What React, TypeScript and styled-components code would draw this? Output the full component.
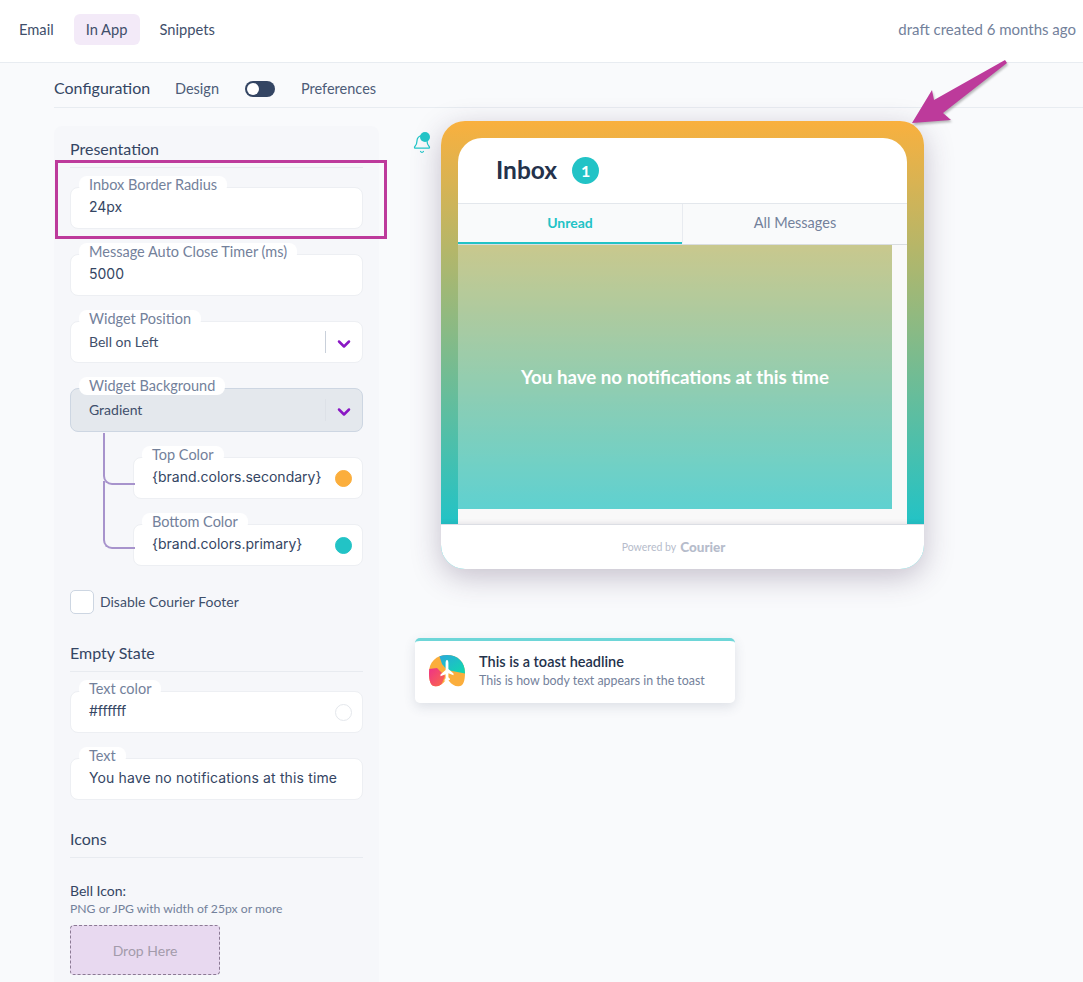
import React from "react";
import styled, { createGlobalStyle } from "styled-components";
import { Bell, ChevronDown } from "lucide-react";

const GlobalStyle = createGlobalStyle`
    html, body {
        margin: 0;
        height: 982px;
        overflow: hidden;
        background: #f9fafc;
        font-family: "Lato", "Noto Sans", sans-serif;
        color: #344563;
    }
    * {
        box-sizing: border-box;
    }
`;

const Page = styled.div`
    position: relative;
    width: 1083px;
    height: 982px;
    overflow: hidden;
`;

const Header = styled.header`
    height: 63px;
    padding: 14px 7px 0 19px;
    display: flex;
    justify-content: space-between;
    background: #fff;
    border-bottom: 1px solid #e8ecf1;
`;

const Tabs = styled.nav`
    display: flex;
    align-items: flex-start;
    gap: 20px;
`;

const Tab = styled.div<{ $active?: boolean }>`
    height: 31px;
    line-height: 31px;
    font-size: 14.7px;
    color: #3f4f6b;
    border-radius: 6px;
    background: ${(p) => (p.$active ? "#f3eaf8" : "transparent")};
    padding: ${(p) => (p.$active ? "0 12px" : "0")};
`;

const Draft = styled.div`
    line-height: 31px;
    font-size: 15px;
    color: #73819b;
`;

const Main = styled.main`
    padding-left: 54px;
`;

const ConfigBar = styled.div`
    height: 45px;
    padding-top: 7px;
    display: flex;
    align-items: center;
    border-bottom: 1px solid #e8ecf1;
`;

const ConfigTitle = styled.div`
    width: 121px;
    padding-bottom: 2px;
    font-size: 16px;
    color: #344563;
`;

const ConfigOption = styled.div`
    font-size: 14.5px;
    color: #4d5c78;
`;

const Toggle = styled.div`
    width: 30px;
    height: 16px;
    margin: 0 26px;
    padding: 2px;
    border-radius: 8px;
    background: #344563;
    &::before {
        content: "";
        display: block;
        width: 12px;
        height: 12px;
        border-radius: 50%;
        background: #fff;
    }
`;

const Columns = styled.div`
    display: flex;
    align-items: flex-start;
`;

const Sidebar = styled.aside`
    width: 325px;
    height: 880px;
    margin-top: 18px;
    padding: 13px 16px 0;
    border-radius: 8px;
    background: #f6f7fa;
`;

const SectionTitle = styled.h2<{ $top?: number }>`
    margin: ${(p) => p.$top ?? 0}px 0 0;
    height: 29px;
    line-height: 19px;
    font-size: 16px;
    font-weight: 400;
    color: #344563;
    border-bottom: 1px solid #e8ebf0;
`;

const Field = styled.div<{ $filled?: boolean; $top?: number; $left?: number }>`
    position: relative;
    height: ${(p) => (p.$filled ? 44 : 42)}px;
    margin-top: ${(p) => p.$top ?? 25}px;
    margin-left: ${(p) => p.$left ?? 0}px;
    padding: 0 10px 0 18px;
    display: flex;
    align-items: center;
    justify-content: space-between;
    border-radius: 8px;
    background: ${(p) => (p.$filled ? "#e4e8ed" : "#fff")};
    border: 1px solid ${(p) => (p.$filled ? "#cdd6e2" : "#edeff3")};
`;

const FieldLabel = styled.span`
    position: absolute;
    left: 8px;
    top: -12px;
    height: 18px;
    padding: 0 10px;
    line-height: 18px;
    white-space: nowrap;
    font-size: 14.5px;
    color: #73819b;
    background: #fff;
    border-radius: 8px;
`;

const Value = styled.span<{ $spaced?: boolean }>`
    font-family: "Inter", "Liberation Sans", sans-serif;
    font-size: 14px;
    letter-spacing: ${(p) => (p.$spaced ? "0.14px" : "0")};
    color: #344563;
    white-space: nowrap;
    padding-bottom: 4px;
`;

const SelectValue = styled.span`
    font-size: 14px;
    color: #3f4f6b;
    padding-bottom: 1px;
`;

const SelectArrow = styled.span<{ $strong?: boolean }>`
    width: 37px;
    height: 22px;
    margin-right: -10px;
    display: flex;
    align-items: center;
    justify-content: center;
    padding-top: 4px;
    color: #8a17c4;
    border-left: 1px solid ${(p) => (p.$strong ? "#c9d0da" : "#dde1e7")};
`;

const Swatch = styled.span<{ $color: string }>`
    width: 17px;
    height: 17px;
    border-radius: 50%;
    background: ${(p) => p.$color};
    border: 1px solid ${(p) => (p.$color === "#fff" ? "#e4e7ec" : p.$color)};
`;

const NestedField = styled(Field)<{ $lineTop: number; $lineHeight: number }>`
    &::before {
        content: "";
        position: absolute;
        left: -31px;
        top: ${(p) => p.$lineTop}px;
        width: 30px;
        height: ${(p) => p.$lineHeight}px;
        border-left: 2px solid #a793cc;
        border-bottom: 2px solid #a793cc;
        border-bottom-left-radius: 9px;
    }
`;

const CheckRow = styled.label`
    margin-top: 24px;
    display: flex;
    align-items: center;
    gap: 6px;
    font-size: 14px;
    color: #3f4f6b;
`;

const CheckText = styled.span`
    padding-bottom: 2px;
`;

const CheckBox = styled.span`
    width: 24px;
    height: 24px;
    border-radius: 5px;
    background: #fff;
    border: 1px solid #cdd6e2;
`;

const UploadLabel = styled.div`
    margin-top: 23px;
    font-size: 14px;
    line-height: 20px;
    color: #344563;
`;

const UploadHint = styled.div`
    font-size: 12.2px;
    line-height: 16px;
    color: #73819b;
`;

const DropZone = styled.div`
    width: 150px;
    height: 50px;
    margin-top: 8px;
    display: flex;
    align-items: center;
    justify-content: center;
    font-size: 14px;
    color: #a39bab;
    background: #e8d9f0;
    border: 1px dashed #8b7a94;
    border-radius: 4px;
`;

const Preview = styled.section`
    padding: 13px 0 0 33px;
    display: flex;
    align-items: flex-start;
`;

const BellHolder = styled.div`
    position: relative;
    width: 29px;
    height: 24px;
    margin-top: 12px;
    padding-top: 1px;
    color: #22c3c6;
    flex: none;
`;

const BellDot = styled.span`
    position: absolute;
    left: 8px;
    top: -1px;
    width: 10px;
    height: 10px;
    border-radius: 50%;
    background: #22c3c6;
`;

const PreviewStack = styled.div`
    display: flex;
    flex-direction: column;
`;

const Widget = styled.div`
    width: 483px;
    height: 448px;
    padding-top: 17px;
    display: flex;
    flex-direction: column;
    border-radius: 24px;
    overflow: hidden;
    background: linear-gradient(180deg, #f9b03e 0%, #22c3c6 90%);
`;

const WidgetShadow = styled.div`
    border-radius: 24px;
    box-shadow: 0 8px 30px rgba(60, 40, 80, 0.28);
`;

const WidgetInner = styled.div`
    flex: 1;
    margin: 0 17px;
    display: flex;
    flex-direction: column;
    border-radius: 24px 24px 0 0;
    overflow: hidden;
`;

const InboxHeader = styled.div`
    height: 65px;
    padding-left: 38px;
    display: flex;
    align-items: center;
    gap: 15px;
    background: #fff;
`;

const InboxTitle = styled.div`
    font-size: 24.5px;
    font-weight: 700;
    color: #24324b;
    padding-bottom: 3px;
`;

const CountBadge = styled.div`
    width: 27px;
    height: 27px;
    display: flex;
    align-items: center;
    justify-content: center;
    border-radius: 50%;
    font-size: 16px;
    font-weight: 700;
    color: #fff;
    background: #22c3c6;
`;

const InboxTabs = styled.div`
    height: 42px;
    display: flex;
    background: #f9fafb;
    border-top: 1px solid #e3e7ec;
    border-bottom: 1px solid #d9dde0;
`;

const InboxTab = styled.div<{ $active?: boolean }>`
    flex: 1;
    padding-bottom: 2px;
    display: flex;
    align-items: center;
    justify-content: center;
    font-size: ${(p) => (p.$active ? 14 : 14.5)}px;
    font-weight: ${(p) => (p.$active ? 700 : 400)};
    color: ${(p) => (p.$active ? "#22c3c6" : "#73819b")};
    border-bottom: 2px solid ${(p) => (p.$active ? "#22c3c6" : "transparent")};
    & + & {
        border-left: 1px solid #e8ebf0;
    }
`;

const InboxBody = styled.div`
    flex: 1;
    display: grid;
    grid-template-columns: 1fr 15px;
    grid-template-rows: 1fr 15px;
`;

const EmptyPanel = styled.div`
    display: flex;
    align-items: center;
    justify-content: center;
    font-size: 18.7px;
    font-weight: 700;
    color: #fff;
    background: rgba(255, 255, 255, 0.25);
`;

const ScrollTrack = styled.div`
    grid-row: 1 / 3;
    grid-column: 2;
    background: #f9f9f9;
`;

const ScrollCorner = styled.div`
    background: #f9f9f9;
`;

const WidgetFooter = styled.div`
    height: 45px;
    padding-right: 18px;
    display: flex;
    align-items: center;
    justify-content: center;
    gap: 4px;
    background: #fff;
    border-top: 1px solid #dcdee4;
    box-shadow: 0 -2px 4px rgba(60, 40, 80, 0.08);
    position: relative;
`;

const PoweredBy = styled.span`
    font-size: 10.5px;
    color: #b6bccb;
`;

const CourierMark = styled.span`
    font-size: 13.5px;
    font-weight: 900;
    color: #b6bccb;
`;

const Toast = styled.div`
    width: 320px;
    height: 65px;
    margin: 69px 0 0 -26px;
    padding: 0 0 3px 13px;
    display: flex;
    align-items: center;
    gap: 13px;
    position: relative;
    background: #fff;
    border-radius: 5px;
    border-top: 3px solid #6ed6d8;
    box-shadow: 0 4px 12px rgba(60, 70, 100, 0.14);
`;

const ToastText = styled.div`
    display: flex;
    flex-direction: column;
    gap: 1px;
`;

const ToastTitle = styled.div`
    font-size: 14.5px;
    line-height: 18px;
    font-weight: 600;
    color: #24324b;
`;

const ToastBody = styled.div`
    font-size: 12.4px;
    line-height: 17px;
    color: #73819b;
`;

const Highlight = styled.div`
    position: absolute;
    left: 55px;
    top: 160px;
    width: 332px;
    height: 79px;
    border: 3px solid #bd3a9b;
    pointer-events: none;
`;

const Arrow = styled.svg`
    position: absolute;
    left: 905px;
    top: 55px;
    filter: drop-shadow(1px 2px 1px rgba(60, 60, 60, 0.35));
`;

const ToastIcon = () => (
    <svg width="38" height="32" viewBox="0 0 38 32" style={{ flex: "none" }}>
        <defs>
            <clipPath id="lungs">
                <path d="M19 0C30 0 37 7 37 18c0 8-2 13-5 13-4 1-8-1-11-5l-2-4-2 4c-3 4-7 6-11 5C3 31 1 26 1 18 1 7 8 0 19 0Z" />
            </clipPath>
            <linearGradient id="cool" x1="0" y1="0" x2="1" y2="1">
                <stop offset="0" stopColor="#2aa8dc" />
                <stop offset="1" stopColor="#0fdcaa" />
            </linearGradient>
            <linearGradient id="hot" x1="0" y1="0" x2="1" y2="1">
                <stop offset="0" stopColor="#ee2f8a" />
                <stop offset="1" stopColor="#fb6d45" />
            </linearGradient>
        </defs>
        <g clipPath="url(#lungs)">
            <rect width="38" height="32" fill="#fbae3c" />
            <path d="M11 0h28v19L19 15 14 9Z" fill="url(#cool)" />
            <path d="M0 14l9-1 8 8-5 12H0Z" fill="url(#hot)" />
        </g>
        <path
            d="M19 5c1 0 1.400 1.500 1.400 3v6l5.100 4.500v1.700l-5.100-2v4l1.500 1.600v1.200L19 25l-2.500 1v-1.200l1.100-1.600v-4l-5.100 2v-1.700l5.100-4.500V8c0-1.500.4-3 1.400-3Z"
            fill="#fff"
        />
    </svg>
);

const App = () => (
    <Page>
        <GlobalStyle />
        <Header>
            <Tabs>
                <Tab>Email</Tab>
                <Tab $active>In App</Tab>
                <Tab>Snippets</Tab>
            </Tabs>
            <Draft>draft created 6 months ago</Draft>
        </Header>
        <Main>
            <ConfigBar>
                <ConfigTitle>Configuration</ConfigTitle>
                <ConfigOption>Design</ConfigOption>
                <Toggle />
                <ConfigOption>Preferences</ConfigOption>
            </ConfigBar>
            <Columns>
                <Sidebar>
                    <SectionTitle>Presentation</SectionTitle>
                    <Field $top={19}>
                        <FieldLabel>Inbox Border Radius</FieldLabel>
                        <Value>24px</Value>
                    </Field>
                    <Field>
                        <FieldLabel>Message Auto Close Timer (ms)</FieldLabel>
                        <Value>5000</Value>
                    </Field>
                    <Field>
                        <FieldLabel>Widget Position</FieldLabel>
                        <SelectValue>Bell on Left</SelectValue>
                        <SelectArrow $strong>
                            <ChevronDown size={20} strokeWidth={3} />
                        </SelectArrow>
                    </Field>
                    <Field $filled>
                        <FieldLabel>Widget Background</FieldLabel>
                        <SelectValue>Gradient</SelectValue>
                        <SelectArrow>
                            <ChevronDown size={20} strokeWidth={3} />
                        </SelectArrow>
                    </Field>
                    <NestedField $left={63} $lineTop={-25} $lineHeight={50}>
                        <FieldLabel>Top Color</FieldLabel>
                        <Value>{"{brand.colors.secondary}"}</Value>
                        <Swatch $color="#fbae3c" />
                    </NestedField>
                    <NestedField $left={63} $lineTop={-44} $lineHeight={66}>
                        <FieldLabel>Bottom Color</FieldLabel>
                        <Value>{"{brand.colors.primary}"}</Value>
                        <Swatch $color="#22c3c6" />
                    </NestedField>
                    <CheckRow>
                        <CheckBox />
                        <CheckText>Disable Courier Footer</CheckText>
                    </CheckRow>
                    <SectionTitle $top={29}>Empty State</SectionTitle>
                    <Field $top={19}>
                        <FieldLabel>Text color</FieldLabel>
                        <Value>#ffffff</Value>
                        <Swatch $color="#fff" />
                    </Field>
                    <Field>
                        <FieldLabel>Text</FieldLabel>
                        <Value $spaced>You have no notifications at this time</Value>
                    </Field>
                    <SectionTitle $top={29}>Icons</SectionTitle>
                    <UploadLabel>Bell Icon:</UploadLabel>
                    <UploadHint>PNG or JPG with width of 25px or more</UploadHint>
                    <DropZone>Drop Here</DropZone>
                </Sidebar>
                <Preview>
                    <BellHolder>
                        <Bell size={20} strokeWidth={1.5} />
                        <BellDot />
                    </BellHolder>
                    <PreviewStack>
                        <WidgetShadow>
                            <Widget>
                                <WidgetInner>
                                    <InboxHeader>
                                        <InboxTitle>Inbox</InboxTitle>
                                        <CountBadge>1</CountBadge>
                                    </InboxHeader>
                                    <InboxTabs>
                                        <InboxTab $active>Unread</InboxTab>
                                        <InboxTab>All Messages</InboxTab>
                                    </InboxTabs>
                                    <InboxBody>
                                        <EmptyPanel>You have no notifications at this time</EmptyPanel>
                                        <ScrollTrack />
                                        <ScrollCorner />
                                    </InboxBody>
                                </WidgetInner>
                                <WidgetFooter>
                                    <PoweredBy>Powered by</PoweredBy>
                                    <CourierMark>Courier</CourierMark>
                                </WidgetFooter>
                            </Widget>
                        </WidgetShadow>
                        <Toast>
                            <ToastIcon />
                            <ToastText>
                                <ToastTitle>This is a toast headline</ToastTitle>
                                <ToastBody>This is how body text appears in the toast</ToastBody>
                            </ToastText>
                        </Toast>
                    </PreviewStack>
                </Preview>
            </Columns>
        </Main>
        <Highlight />
        <Arrow width="110" height="75" viewBox="905 55 110 75">
            <polygon points="912,123 932,90 934,100 1005,60 1007,63 943,113 951,120" fill="#bd3a9b" />
        </Arrow>
    </Page>
);

export default App;
